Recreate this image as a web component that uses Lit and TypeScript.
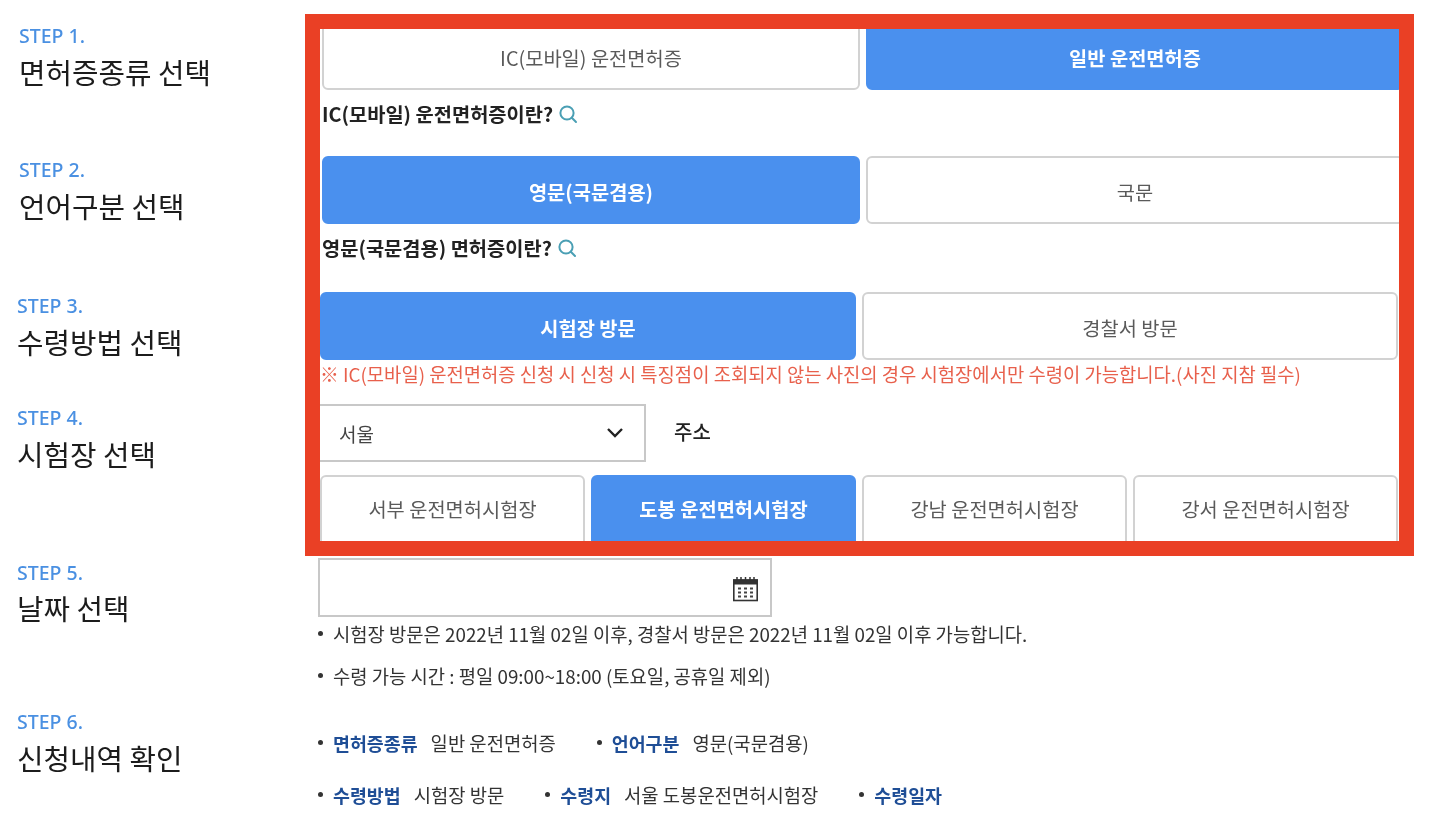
import { LitElement, html, css } from "lit";
import { customElement } from "lit/decorators.js";

const search = html`<svg class="mag" viewBox="0 0 20 20" fill="none" stroke="#4a9fb4" stroke-width="2"><circle cx="9" cy="9" r="6.6"/><path d="M13.8 13.8 18 18" stroke-linecap="round"/></svg>`;

@customElement("app-root")
export class AppRoot extends LitElement {
  static styles = css`
    :host {
      display: block;
      position: relative;
      width: 1432px;
      height: 832px;
      overflow: hidden;
      background: #fff;
      font-family: "Noto Sans CJK KR", "Noto Sans", sans-serif;
      color: #222;
    }
    .page { padding-top: 22px; filter: blur(0.5px); }
    .sec { display: grid; grid-template-columns: 318px 1fr; }
    .s1 { height: 134px; }
    .s2 { height: 136px; }
    .s3 { height: 112px; }
    .s4 { height: 154px; }
    .s5 { height: 150px; }
    .s6 { height: 124px; }
    .lab { padding: 3px 0 0 17px; }
    .s1 .lab, .s2 .lab { padding-left: 19px; }
    .s5 .lab { padding-top: 4px; }
    .step { font-size: 19.5px; line-height: 22px; color: #4a90e2; font-family: "Noto Sans", sans-serif; font-weight: 500; }
    .ttl { font-size: 28.8px; line-height: 42px; margin-top: 4px; color: #1c1c1c; white-space: nowrap; }
    .s5 .ttl { margin-top: 3px; }
    .body { min-width: 0; }
    .s1 .body, .s2 .body { padding-left: 4px; }
    .s3 .body, .s4 .body { padding-left: 2px; }
    .btns { display: flex; gap: 6px; width: 1078px; }
    .s1 .btns, .s2 .btns { width: 1082px; }
    .b {
      flex: 1 1 0; height: 68px; box-sizing: border-box; border: 2px solid #d2d2d2; border-radius: 6px;
      background: #fff; color: #5a5a5a; font-size: 19.8px; display: flex; align-items: center; justify-content: center;
      white-space: nowrap; padding-top: 2px;
    }
    .b.on { background: #4a90ee; border-color: #4a90ee; color: #fff; font-weight: 700; }
    .q { font-size: 19.8px; font-weight: 700; color: #222; height: 48px; display: flex; align-items: center; gap: 5px; white-space: nowrap; margin-top: -1px; }
    .mag { width: 20px; height: 20px; margin-top: 2px; }
    .note { font-size: 18.8px; line-height: 28px; color: #e8604c; white-space: nowrap; }
    .selrow { display: flex; align-items: center; gap: 28px; height: 58px; }
    .sel {
      width: 328px; height: 58px; box-sizing: border-box; border: 2px solid #c8c8c8; background: #fff; display: flex; align-items: center;
      justify-content: space-between; padding: 0 20px 0 19px; font-size: 19px; color: #444; margin-left: -2px;
    }
    .addr { font-size: 20px; font-weight: 500; color: #222; margin-top: -4px; }
    .s4 .btns { margin-top: 13px; }
    .s4 .b { height: 72px; padding: 0 0 6px; }
    .date {
      width: 454px; height: 59px; box-sizing: border-box; border: 2px solid #c8c8c8; display: flex; align-items: center; justify-content: flex-end; padding: 3px 11px 0 0;
    }
    .li { font-size: 18.8px; color: #333; white-space: nowrap; display: flex; align-items: center; gap: 10px; }
    .li::before { content: ""; width: 5px; height: 5px; border-radius: 50%; background: #333; }
    .s5 .li { height: 42px; }
    .s5 .date + .li { margin-top: -5px; }
    .s6 .body { padding-top: 8px; }
    .s6 .row { display: flex; height: 52px; align-items: center; gap: 41px; }
    .s6 b { color: #1f4e96; font-size: 18.4px; font-weight: 700; margin-right: 13px; }
    .frame { position: absolute; left: 305px; top: 14px; width: 1109px; height: 542px; box-sizing: border-box; border: 15px solid #ea4025; pointer-events: none; }
  `;

  btns(items: [string, boolean][]) {
    return html`<div class="btns">${items.map(([t, on]) => html`<div class="b ${on ? "on" : ""}">${t}</div>`)}</div>`;
  }

  lab(n: number, t: string) {
    return html`<div class="lab"><div class="step">STEP ${n}.</div><div class="ttl">${t}</div></div>`;
  }

  render() {
    return html`
      <div class="page">
        <section class="sec s1">
          ${this.lab(1, "면허증종류 선택")}
          <div class="body">
            ${this.btns([["IC(모바일) 운전면허증", false], ["일반 운전면허증", true]])}
            <div class="q">IC(모바일) 운전면허증이란? ${search}</div>
          </div>
        </section>
        <section class="sec s2">
          ${this.lab(2, "언어구분 선택")}
          <div class="body">
            ${this.btns([["영문(국문겸용)", true], ["국문", false]])}
            <div class="q">영문(국문겸용) 면허증이란? ${search}</div>
          </div>
        </section>
        <section class="sec s3">
          ${this.lab(3, "수령방법 선택")}
          <div class="body">
            ${this.btns([["시험장 방문", true], ["경찰서 방문", false]])}
            <div class="note">※ IC(모바일) 운전면허증 신청 시 신청 시 특징점이 조회되지 않는 사진의 경우 시험장에서만 수령이 가능합니다.(사진 지참 필수)</div>
          </div>
        </section>
        <section class="sec s4">
          ${this.lab(4, "시험장 선택")}
          <div class="body">
            <div class="selrow">
              <div class="sel">서울
                <svg width="18" height="12" viewBox="0 0 18 12" fill="none" stroke="#222" stroke-width="2.4"><path d="M2 2l7 7 7-7"/></svg>
              </div>
              <div class="addr">주소</div>
            </div>
            ${this.btns([["서부 운전면허시험장", false], ["도봉 운전면허시험장", true], ["강남 운전면허시험장", false], ["강서 운전면허시험장", false]])}
          </div>
        </section>
        <section class="sec s5">
          ${this.lab(5, "날짜 선택")}
          <div class="body">
            <div class="date">
              <svg width="27" height="26" viewBox="0 0 27 26" fill="none">
                <path d="M5 1v4M9 1v4M13.5 1v4M18 1v4M22 1v4" stroke="#333" stroke-width="1.5"/>
                <rect x="1" y="3.5" width="25" height="5" fill="#333"/>
                <rect x="1.8" y="4" width="23.4" height="20.5" stroke="#333" stroke-width="1.6"/>
                <path d="M6 12.5h3M12 12.5h3M18 12.5h3M6 16.5h3M12 16.5h3M18 16.5h3M6 20.5h3M12 20.5h3M18 20.5h3" stroke="#444" stroke-width="2"/>
              </svg>
            </div>
            <div class="li">시험장 방문은 2022년 11월 02일 이후, 경찰서 방문은 2022년 11월 02일 이후 가능합니다.</div>
            <div class="li">수령 가능 시간 : 평일 09:00~18:00 (토요일, 공휴일 제외)</div>
          </div>
        </section>
        <section class="sec s6">
          ${this.lab(6, "신청내역 확인")}
          <div class="body">
            <div class="row">
              <div class="li"><span><b>면허증종류</b>일반 운전면허증</span></div>
              <div class="li"><span><b>언어구분</b>영문(국문겸용)</span></div>
            </div>
            <div class="row">
              <div class="li"><span><b>수령방법</b>시험장 방문</span></div>
              <div class="li"><span><b>수령지</b>서울 도봉운전면허시험장</span></div>
              <div class="li"><span><b>수령일자</b></span></div>
            </div>
          </div>
        </section>
      </div>
      <div class="frame"></div>
    `;
  }
}
